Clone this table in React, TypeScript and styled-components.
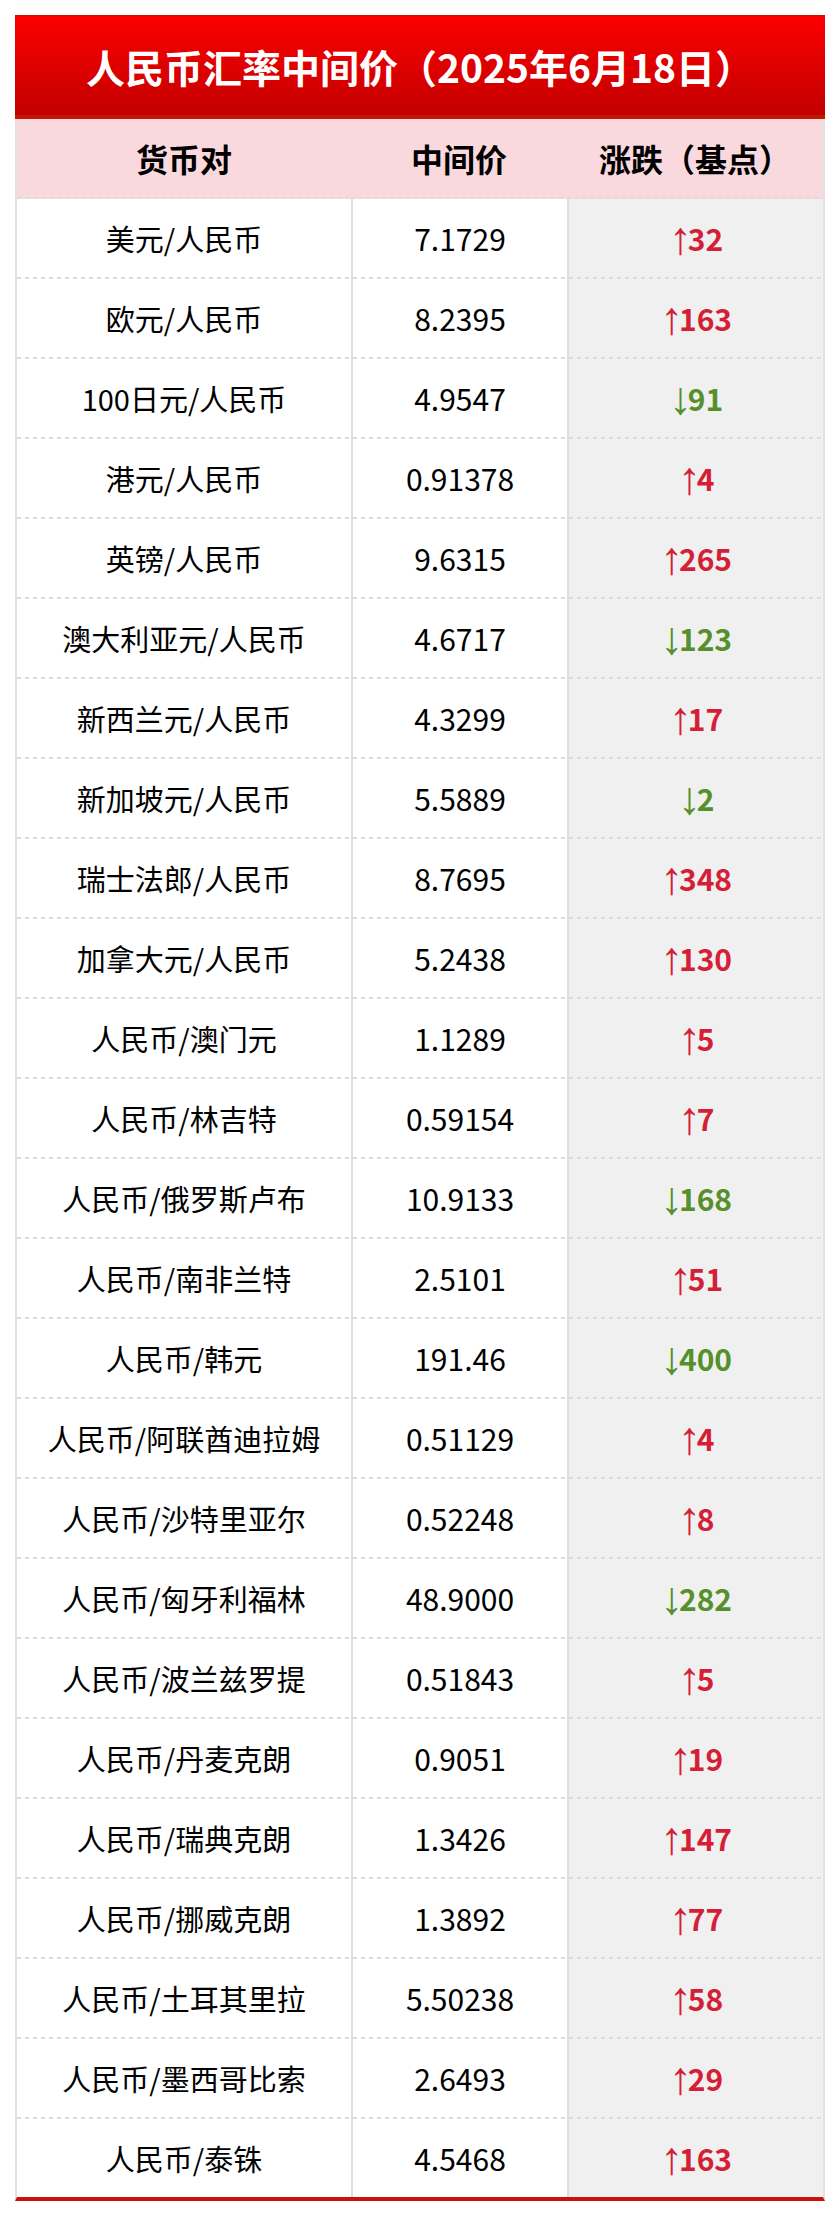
import React from "react";
import styled, { createGlobalStyle } from "styled-components";

const rates = [
  { pair: "美元/人民币", mid: "7.1729", change: 32 },
  { pair: "欧元/人民币", mid: "8.2395", change: 163 },
  { pair: "100日元/人民币", mid: "4.9547", change: -91 },
  { pair: "港元/人民币", mid: "0.91378", change: 4 },
  { pair: "英镑/人民币", mid: "9.6315", change: 265 },
  { pair: "澳大利亚元/人民币", mid: "4.6717", change: -123 },
  { pair: "新西兰元/人民币", mid: "4.3299", change: 17 },
  { pair: "新加坡元/人民币", mid: "5.5889", change: -2 },
  { pair: "瑞士法郎/人民币", mid: "8.7695", change: 348 },
  { pair: "加拿大元/人民币", mid: "5.2438", change: 130 },
  { pair: "人民币/澳门元", mid: "1.1289", change: 5 },
  { pair: "人民币/林吉特", mid: "0.59154", change: 7 },
  { pair: "人民币/俄罗斯卢布", mid: "10.9133", change: -168 },
  { pair: "人民币/南非兰特", mid: "2.5101", change: 51 },
  { pair: "人民币/韩元", mid: "191.46", change: -400 },
  { pair: "人民币/阿联酋迪拉姆", mid: "0.51129", change: 4 },
  { pair: "人民币/沙特里亚尔", mid: "0.52248", change: 8 },
  { pair: "人民币/匈牙利福林", mid: "48.9000", change: -282 },
  { pair: "人民币/波兰兹罗提", mid: "0.51843", change: 5 },
  { pair: "人民币/丹麦克朗", mid: "0.9051", change: 19 },
  { pair: "人民币/瑞典克朗", mid: "1.3426", change: 147 },
  { pair: "人民币/挪威克朗", mid: "1.3892", change: 77 },
  { pair: "人民币/土耳其里拉", mid: "5.50238", change: 58 },
  { pair: "人民币/墨西哥比索", mid: "2.6493", change: 29 },
  { pair: "人民币/泰铢", mid: "4.5468", change: 163 },
];

const GlobalStyle = createGlobalStyle`
  body {
    margin: 0;
    background: #ffffff;
    font-family: "Noto Sans CJK SC", "Noto Sans", sans-serif;
    color: #000000;
  }
`;

const Page = styled.div`
  width: 810px;
  padding: 15px;
`;

const Title = styled.div`
  height: 99px;
  border-top: 1px solid #c81400;
  border-bottom: 4px solid #c51600;
  background: linear-gradient(to bottom, #fb0000, #c30000);
  color: #ffffff;
  font-size: 39px;
  font-weight: 700;
  display: flex;
  align-items: center;
  justify-content: center;
`;

const Table = styled.div`
  border-left: 2px solid #e2e2e2;
  border-right: 2px solid #e2e2e2;
  border-bottom: 4px solid #c8140c;
`;

const Row = styled.div<{ $last?: boolean }>`
  display: grid;
  grid-template-columns: 334px 216px 256px;
  height: ${(p) => (p.$last ? "78px" : "80px")};
`;

const Cell = styled.div<{ $bg: string; $divider?: boolean; $dash: boolean }>`
  display: flex;
  align-items: center;
  justify-content: center;
  padding-bottom: ${(p) => (p.$dash ? "2px" : "0")};
  border-left: ${(p) => (p.$divider ? "2px solid #dedede" : "none")};
  background-color: ${(p) => p.$bg};
  background-image: ${(p) =>
    p.$dash
      ? "linear-gradient(to right, #dcdcdc 4px, transparent 4px)"
      : "none"};
  background-size: 8px 2px;
  background-repeat: repeat-x;
  background-position: left bottom;
  font-size: 29px;
  white-space: nowrap;
`;

const HeadCell = styled(Cell)`
  font-size: 32px;
  font-weight: 700;
`;

const MidCell = styled(Cell)`
  font-size: 30px;
`;

const Change = styled.span<{ $up: boolean }>`
  color: ${(p) => (p.$up ? "#d41f37" : "#56902c")};
  font-weight: 700;
  font-size: 30px;
  display: flex;
  align-items: center;
`;

const Arrow = styled.span`
  font-family: "Liberation Sans", sans-serif;
  font-weight: 400;
  font-size: 46px;
  line-height: 1;
  letter-spacing: -4px;
`;

export default function App() {
  return (
    <>
      <GlobalStyle />
      <Page>
        <Title>人民币汇率中间价（2025年6月18日）</Title>
        <Table>
          <Row>
            <HeadCell $bg="#f9d9dd" $dash>货币对</HeadCell>
            <HeadCell $bg="#f9d9dd" $dash>中间价</HeadCell>
            <HeadCell $bg="#f9d9dd" $dash>涨跌（基点）</HeadCell>
          </Row>
          {rates.map((r, i) => {
            const last = i === rates.length - 1;
            const up = r.change > 0;
            return (
              <Row key={r.pair} $last={last}>
                <Cell $bg="#ffffff" $dash={!last}>{r.pair}</Cell>
                <MidCell $bg="#ffffff" $dash={!last} $divider>{r.mid}</MidCell>
                <Cell $bg="#f0f0f0" $dash={!last} $divider>
                  <Change $up={up}>
                    <Arrow>{up ? "↑" : "↓"}</Arrow>
                    {Math.abs(r.change)}
                  </Change>
                </Cell>
              </Row>
            );
          })}
        </Table>
      </Page>
    </>
  );
}
